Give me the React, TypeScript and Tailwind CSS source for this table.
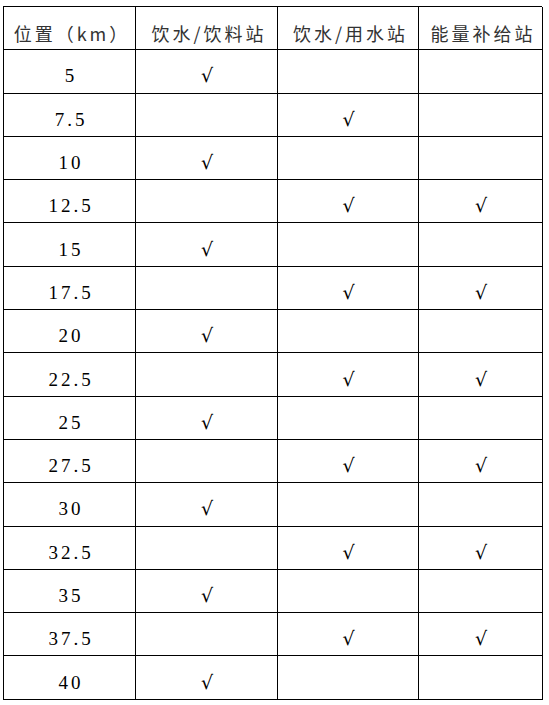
const headers = ["位置（km）", "饮水/饮料站", "饮水/用水站", "能量补给站"]

// [km, drink, water, energy]
const rows: [string, boolean, boolean, boolean][] = [
  ["5", true, false, false],
  ["7.5", false, true, false],
  ["10", true, false, false],
  ["12.5", false, true, true],
  ["15", true, false, false],
  ["17.5", false, true, true],
  ["20", true, false, false],
  ["22.5", false, true, true],
  ["25", true, false, false],
  ["27.5", false, true, true],
  ["30", true, false, false],
  ["32.5", false, true, true],
  ["35", true, false, false],
  ["37.5", false, true, true],
  ["40", true, false, false],
]

const cell = "h-[43.3px] border-r border-b border-black flex items-center justify-center pt-[9px]"

function Check({ on }: { on: boolean }) {
  return (
    <div className={cell}>
      {on && <span className="text-[19px] leading-none text-black font-[family-name:DejaVu_Sans,sans-serif] pl-[1px]">√</span>}
    </div>
  )
}

export default function App() {
  return (
    <div className="w-[549px] h-[705px] bg-white pt-[6px] pl-[3px]">
      <div className="w-[539px] grid grid-cols-[132px_142px_141px_124px] border-t border-l border-black">
        {headers.map((h) => (
          <div key={h} className={cell}>
            <span className="text-[18px] leading-none tracking-[3px] text-[#333] font-[family-name:Noto_Sans_CJK_SC,sans-serif] pl-[5px]">{h}</span>
          </div>
        ))}
        {rows.map(([km, a, b, c]) => (
          <div key={km} className="contents">
            <div className={cell}>
              <span className="text-[19px] leading-none tracking-[3px] text-black font-[family-name:Liberation_Serif,serif] pl-[3px]">{km}</span>
            </div>
            <Check on={a} />
            <Check on={b} />
            <Check on={c} />
          </div>
        ))}
      </div>
    </div>
  )
}
